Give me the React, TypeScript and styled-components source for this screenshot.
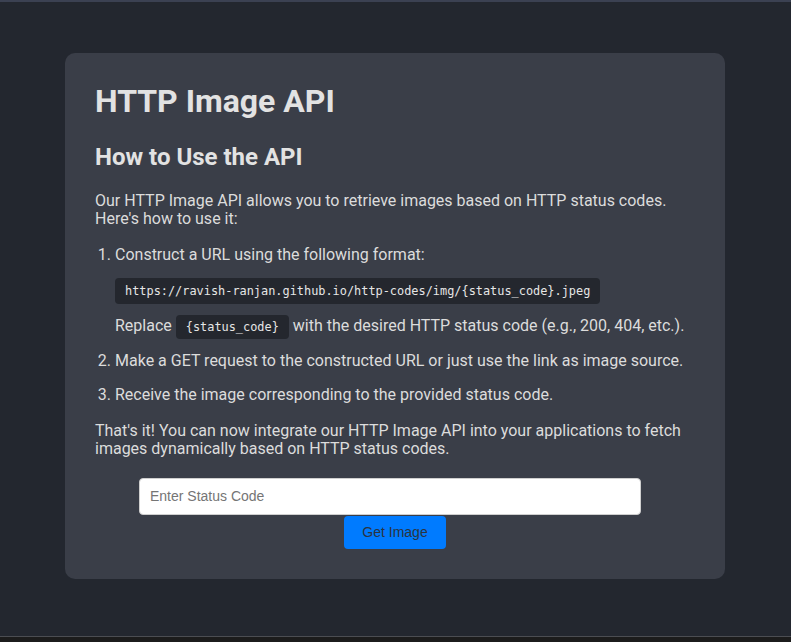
import React from "react";
import styled, { createGlobalStyle } from "styled-components";

const Global = createGlobalStyle`
  html, body { margin: 0; padding: 0; background: #1c1c1c; }
  body { font-family: Roboto, "Noto Sans", sans-serif; }
  * { box-sizing: border-box; }
`;

const Page = styled.div`
  height: 637px;
  background: #23272f;
  border-top: 2px solid #3b4152;
  border-bottom: 1px solid #4b4d52;
  padding: 51px 1px 0 0;
  display: flex;
  flex-direction: column;
  align-items: center;
`;

const Card = styled.main`
  width: 660px;
  background: #3a3e48;
  border-radius: 10px;
  padding: 30px;
  color: #e2e2e2;
`;

const Title = styled.h1`
  margin: 0 0 22px;
  font-size: 32px;
  font-weight: 700;
  line-height: 1.172;
`;

const Subtitle = styled.h2`
  margin: 0 0 21px;
  font-size: 24px;
  font-weight: 700;
  line-height: 1.172;
`;

const Text = styled.p`
  margin: 0 0 17px;
  font-size: 16px;
  line-height: 18.5px;
  color: #dcdcdc;
`;

const Steps = styled.ol`
  margin: 0 0 17px;
  padding-left: 20px;
  font-size: 16px;
  line-height: 18.5px;
  color: #dcdcdc;
`;

const Step = styled.li`
  margin-bottom: 16px;
  &:last-child { margin-bottom: 0; }
`;

const CodeBlock = styled.pre`
  display: block;
  width: fit-content;
  margin: 14px 0 13px;
  padding: 6px 10px;
  background: #24272e;
  border-radius: 4px;
  font-family: "DejaVu Sans Mono", "Liberation Mono", monospace;
  font-size: 11.9px;
  line-height: 14px;
  color: #e6e6e6;
`;

const InlineCode = styled.code`
  padding: 5px 10px;
  background: #24272e;
  border-radius: 4px;
  font-family: "DejaVu Sans Mono", "Liberation Mono", monospace;
  font-size: 11.9px;
  line-height: 14px;
  color: #e6e6e6;
`;

const Form = styled.div`
  display: flex;
  flex-direction: column;
  align-items: center;
  margin-top: 19px;
`;

const Input = styled.input`
  width: 502px;
  height: 37px;
  margin-right: 10px;
  padding: 0 10px;
  border: 1px solid #cfcfcf;
  border-radius: 4px;
  background: #ffffff;
  font-family: "Liberation Sans", Arial, sans-serif;
  font-size: 14px;
  color: #333;
  outline: none;
  &::placeholder { color: #757575; }
`;

const Button = styled.button`
  width: 102px;
  height: 33px;
  margin-top: 1px;
  border: none;
  border-radius: 4px;
  background: #007bff;
  color: #2b3440;
  font-family: "Liberation Sans", Arial, sans-serif;
  font-size: 14px;
  cursor: pointer;
`;

export default function App() {
  return (
    <>
      <Global />
      <Page>
        <Card>
          <Title>HTTP Image API</Title>
          <Subtitle>How to Use the API</Subtitle>
          <Text>
            Our HTTP Image API allows you to retrieve images based on HTTP status codes.
            Here's how to use it:
          </Text>
          <Steps>
            <Step>
              Construct a URL using the following format:
              <CodeBlock>https://ravish-ranjan.github.io/http-codes/img/{"{status_code}"}.jpeg</CodeBlock>
              Replace <InlineCode>{"{status_code}"}</InlineCode> with the desired HTTP status code (e.g., 200, 404, etc.).
            </Step>
            <Step>Make a GET request to the constructed URL or just use the link as image source.</Step>
            <Step>Receive the image corresponding to the provided status code.</Step>
          </Steps>
          <Text>
            That's it! You can now integrate our HTTP Image API into your applications to fetch
            images dynamically based on HTTP status codes.
          </Text>
          <Form>
            <Input placeholder="Enter Status Code" />
            <Button>Get Image</Button>
          </Form>
        </Card>
      </Page>
    </>
  );
}
